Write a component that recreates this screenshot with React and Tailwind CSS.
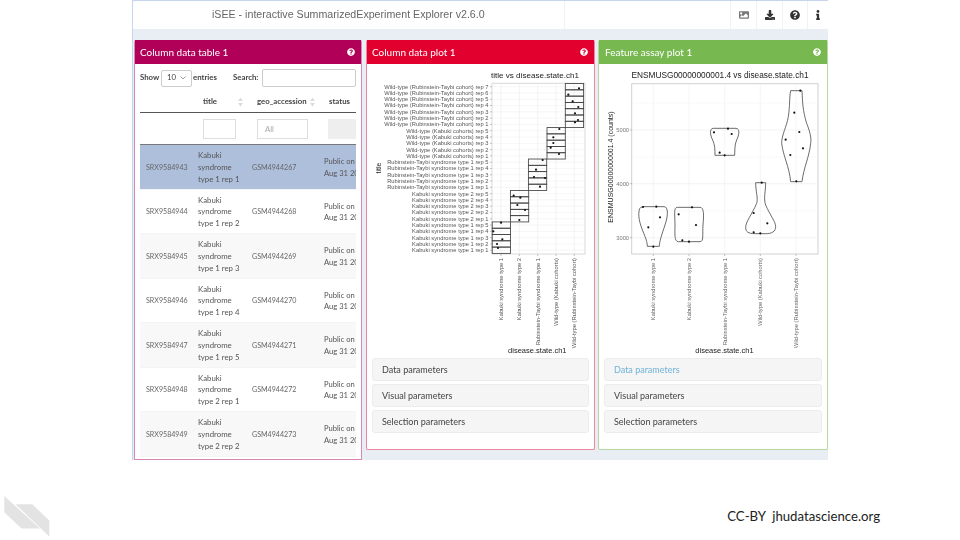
import React from "react";
import { FaDownload, FaQuestionCircle, FaInfo, FaImage } from "react-icons/fa";

const rows = [
  ["SRX9584943", "type 1 rep 1", "Kabuki", "GSM4944267", "bg-[#aebfdc]"],
  ["SRX9584944", "type 1 rep 2", "Kabuki", "GSM4944268", "bg-white"],
  ["SRX9584945", "type 1 rep 3", "Kabuki", "GSM4944269", "bg-[#f8f8f8]"],
  ["SRX9584946", "type 1 rep 4", "Kabuki", "GSM4944270", "bg-white"],
  ["SRX9584947", "type 1 rep 5", "Kabuki", "GSM4944271", "bg-[#f8f8f8]"],
  ["SRX9584948", "type 2 rep 1", "Kabuki", "GSM4944272", "bg-white"],
  ["SRX9584949", "type 2 rep 2", "Kabuki", "GSM4944273", "bg-[#f8f8f8]"],
];

function Sort() {
  return (
    <svg width="5" height="10" viewBox="0 0 5 10" className="shrink-0">
      <path d="M2.5 0.5 L5 4 L0 4 Z M2.5 9.5 L5 6 L0 6 Z" fill="#dcdcdc" />
    </svg>
  );
}

function Header({ title, bar, border, children, cls }) {
  return (
    <section className={`flex flex-col shrink-0 border-x border-b rounded-t-[2px] ${border} ${cls}`}>
      <header className={`h-[24px] shrink-0 flex items-center justify-between pr-[6px] text-white text-[10px] ${bar}`}>
        <span>{title}</span>
        <FaQuestionCircle className="w-[8px] h-[8px]" />
      </header>
      {children}
    </section>
  );
}

function Table() {
  return (
    <div className="flex-1 min-h-0 overflow-hidden bg-white px-[5px] text-[7.8px] text-[#555]">
      <div className="h-[28px] flex items-center text-[#444]">
        <span className="w-[21px] font-bold">Show</span>
        <span className="w-[31px] h-[17px] border border-[#ccc] rounded-[2px] flex items-center justify-between px-[5px] font-normal">
          <span>10</span>
          <svg width="6" height="4" viewBox="0 0 6 4"><path d="M0.5 0.5 L3 3 L5.5 0.5" fill="none" stroke="#777" strokeWidth="0.7" /></svg>
        </span>
        <span className="w-[41px] pl-[1px] font-bold">entries</span>
        <span className="w-[29px] font-bold">Search:</span>
        <span className="w-[94px] h-[18px] border border-[#ccc] rounded-[2px] bg-white" />
      </div>
      <div className="grid grid-cols-[58px_54px_72px_32px] h-[21px] border-b border-[#555] items-center font-bold text-[#444]">
        <span />
        <span className="pl-[5px] flex justify-between pr-[9px] items-center">title<Sort /></span>
        <span className="pl-[5px] flex justify-between pr-[9px] items-center">geo_accession<Sort /></span>
        <span className="pl-[5px]">status</span>
      </div>
      <div className="grid grid-cols-[58px_54px_72px_32px] h-[32px] border-b border-[#777] pt-[6px] items-start">
        <span />
        <span className="ml-[5px] w-[33px] h-[20px] border border-[#ddd] bg-white" />
        <span className="ml-[5px] w-[51px] h-[20px] border border-[#ddd] bg-white text-[#aaa] pl-[7px] leading-[18px]">All</span>
        <span className="ml-[4px] h-[20px] bg-[#eeeeee]" />
      </div>
      {rows.map((r) => (
        <div key={r[0]} className={`grid grid-cols-[58px_54px_72px_32px] h-[44.5px] pt-[2px] items-center leading-[11.7px] border-b border-[#f4f4f4] ${r[4]}`}>
          <span className="pl-[6px] text-[7.1px] text-[#666]">{r[0]}</span>
          <span>{r[2]}<br />syndrome<br />{r[1]}</span>
          <span className="text-[7.1px] text-[#666]">{r[3]}</span>
          <span className="whitespace-nowrap overflow-hidden text-[7.6px]">Public on<br />Aug 31 20</span>
        </div>
      ))}
    </div>
  );
}

function Accordion({ active, cls }) {
  const items = ["Data parameters", "Visual parameters", "Selection parameters"];
  return (
    <div className={`flex flex-col gap-[3px] ${cls}`}>
      {items.map((t, i) => (
        <div key={t} className={`h-[23px] rounded-[3px] bg-[#f5f5f5] border border-[#ececec] flex items-center pl-[9px] text-[9px] ${active && i === 0 ? "text-[#6fb2da]" : "text-[#444]"}`}>
          {t}
        </div>
      ))}
    </div>
  );
}

const labels = [
  ...[7, 6, 5, 4, 3, 2, 1].map((n) => `Wild-type (Rubinstein-Taybi cohort) rep ${n}`),
  ...[5, 4, 3, 2, 1].map((n) => `Wild-type (Kabuki cohorts) rep ${n}`),
  ...[5, 4, 3, 2, 1].map((n) => `Rubinstein-Taybi syndrome type 1 rep ${n}`),
  ...[5, 4, 3, 2, 1].map((n) => `Kabuki syndrome type 2 rep ${n}`),
  ...[5, 4, 3, 2, 1].map((n) => `Kabuki syndrome type 1 rep ${n}`),
];
const cats = ["Kabuki syndrome type 1", "Kabuki syndrome type 2", "Rubinstein-Taybi syndrome type 1", "Wild-type (Kabuki cohorts)", "Wild-type (Rubinstein-Taybi cohort)"];
const rowY = (i) => 86.7 + i * 6.29;
const svgFont = "Liberation Sans, Arial, sans-serif";

function TitlePlot() {
  const ticks = [501, 519.3, 537.7, 556, 574.3];
  const boxes = [
    [565.3, 0, 7], [547, 7, 5], [528.4, 12, 5], [510.4, 17, 5], [492.2, 22, 5],
  ];
  const pts3 = [[642,85],[610,104],[623,124],[640,141],[630,160],[639,180],[630,187],[583,207],[565,232],[565,249],[557,263],[582,282],[533,300],[513,329],[507,351],[540,354],[525,380],[446,407],[466,413],[457,435]];
  const pts4 = [[480,15],[463,45],[408,53],[385,79],[412,103],[396,117],[399,129]];
  return (
    <svg viewBox="367 64 227 294" className="w-[227px] h-[294px] block shrink-0" fontFamily={svgFont}>
      <text x="535" y="78" textAnchor="middle" fontSize="8.1" fill="#222">title vs disease.state.ch1</text>
      <rect x="492" y="83.3" width="93" height="170.7" fill="#fff" stroke="#d9d9d9" strokeWidth="1" />
      {labels.map((l, i) => (
        <g key={l}>
          <line x1="492" x2="585" y1={rowY(i)} y2={rowY(i)} stroke="#f0f0f0" strokeWidth="0.6" />
          <line x1="490" x2="492" y1={rowY(i)} y2={rowY(i)} stroke="#888" strokeWidth="0.5" />
          <text x="488.5" y={rowY(i) + 1.9} textAnchor="end" fontSize="5.75" fill="#555">{l}</text>
        </g>
      ))}
      {ticks.map((x, i) => (
        <g key={x}>
          <line x1={x} x2={x} y1="83.3" y2="254" stroke="#eeeeee" strokeWidth="0.7" />
          <line x1={x} x2={x} y1="254" y2="256" stroke="#888" strokeWidth="0.5" />
          <text transform={`translate(${x + 1.9} 258) rotate(-90)`} textAnchor="end" fontSize="5.8" fill="#555">{cats[i]}</text>
        </g>
      ))}
      {boxes.map(([x, s, n]) =>
        Array.from({ length: n }).map((_, k) => (
          <rect key={`${x}-${k}`} x={x} y={rowY(s + k) - 3.15} width="18.3" height="6.29" fill="none" stroke="#444" strokeWidth="0.85" />
        ))
      )}
      {pts3.map(([x, y], i) => <circle key={i} cx={365 + x / 3} cy={60 + y / 3} r="1.1" fill="#111" />)}
      {pts4.map(([x, y], i) => <circle key={i} cx={365 + x / 3} cy={205 + y / 3} r="1.1" fill="#111" />)}
      <text x="537.3" y="353" textAnchor="middle" fontSize="7.5" fill="#222">disease.state.ch1</text>
      <text transform="translate(380.5 168) rotate(-90)" textAnchor="middle" fontSize="7" fill="#222">title</text>
    </svg>
  );
}

function ViolinPlot() {
  const ticks = [653.3, 689, 724.7, 760.3, 796];
  const ys = [[130, "5000"], [183.7, "4000"], [237.7, "3000"]];
  const minor = [103, 157, 211];
  return (
    <svg viewBox="599 64 228 294" className="w-[228px] h-[294px] block shrink-0" fontFamily={svgFont}>
      <text x="720" y="78" textAnchor="middle" fontSize="8.3" fill="#222">ENSMUSG00000000001.4 vs disease.state.ch1</text>
      <rect x="631.7" y="83.7" width="186.3" height="170.3" fill="#fff" stroke="#d0d0d0" strokeWidth="1" />
      {minor.map((y) => <line key={y} x1="632" x2="818" y1={y} y2={y} stroke="#f5f5f5" strokeWidth="0.6" />)}
      {ys.map(([y, t]) => (
        <g key={t}>
          <line x1="632" x2="818" y1={y} y2={y} stroke="#eeeeee" strokeWidth="0.7" />
          <line x1="630" x2="632" y1={y} y2={y} stroke="#888" strokeWidth="0.5" />
          <text x="629" y={y + 1.9} textAnchor="end" fontSize="5.7" fill="#777">{t}</text>
        </g>
      ))}
      {ticks.map((x, i) => (
        <g key={x}>
          <line x1={x} x2={x} y1="84" y2="254" stroke="#f0f0f0" strokeWidth="0.7" />
          <line x1={x} x2={x} y1="254" y2="256" stroke="#888" strokeWidth="0.5" />
          <text transform={`translate(${x + 1.9} 258) rotate(-90)`} textAnchor="end" fontSize="5.8" fill="#666">{cats[i]}</text>
        </g>
      ))}
      <g transform="translate(600 205) scale(0.3333)" fill="none" stroke="#555" strokeWidth="2.6">
        <path d="M128 5 L192 5 C205 5 205 30 195 60 C185 90 178 110 178 124 L142 124 C142 105 130 85 122 60 C115 40 112 5 128 5 Z" />
        <path d="M232 7 L300 7 C312 7 312 30 309 60 C307 90 312 110 300 110 L235 110 C222 110 225 85 225 60 C225 30 220 7 232 7 Z" />
        <path d="M467 -67 L497 -67 C497 -40 490 -20 497 0 C510 30 527 50 527 65 C527 80 515 86 497 86 L465 86 C445 86 437 80 437 68 C437 50 455 30 470 -5 C475 -20 467 -40 467 -67 Z" />
        {[[129,6],[169,5],[180,37],[145,67],[160,125],[236,28],[276,7],[288,60],[247,106],[267,110],[461,24],[502,55],[461,82],[481,85],[485,-67]].map(([x, y], i) => (
          <circle key={i} cx={x} cy={y} r="3.3" fill="#111" stroke="none" />
        ))}
      </g>
      <g transform="translate(600 60) scale(0.3333)" fill="none" stroke="#555" strokeWidth="2.6">
        <path d="M340 205 L408 205 C420 205 418 225 410 240 C403 255 405 275 404 286 L345 286 C345 270 345 255 338 240 C330 225 328 205 340 205 Z" />
        <path d="M572 92 L606 92 C608 130 608 150 620 190 C630 215 635 235 632 250 C628 290 612 320 606 365 L572 365 C568 320 550 290 545 250 C545 225 560 200 565 170 C570 140 568 110 572 92 Z" />
        {[[342,217],[384,206],[395,222],[359,278],[374,286],[601,92],[583,158],[598,216],[557,239],[609,265],[571,285],[589,364]].map(([x, y], i) => (
          <circle key={i} cx={x} cy={y} r="3.3" fill="#111" stroke="none" />
        ))}
      </g>
      <text x="724.5" y="353" textAnchor="middle" fontSize="7.5" fill="#222">disease.state.ch1</text>
      <text transform="translate(613 167) rotate(-90)" textAnchor="middle" fontSize="7" fill="#222">ENSMUSG00000000001.4 (counts)</text>
    </svg>
  );
}

export default function App() {
  const cells = [
    [FaImage, "w-[26px]", "text-[#777]"],
    [FaDownload, "w-[26px]", "text-[#333]"],
    [FaQuestionCircle, "w-[25px]", "text-[#333]"],
    [FaInfo, "w-[20px]", "text-[#333]"],
  ];
  return (
    <div className="w-[960px] h-[540px] bg-white overflow-hidden font-['Lato','Liberation_Sans',sans-serif]">
      <div className="ml-[132px] w-[696px] h-[460px] bg-[#e9edf4] border-l border-t border-[#c5d5ee] flex flex-col blur-[0.4px]">
        <div className="h-[28px] shrink-0 bg-white flex items-center">
          <div className="w-[431px] shrink-0 h-full flex items-center pl-[79px] text-[10.65px] text-[#666] font-['Liberation_Sans',sans-serif] whitespace-nowrap">
            iSEE - interactive SummarizedExperiment Explorer v2.6.0
          </div>
          <div className="w-[166px] shrink-0 h-full border-l border-[#f2f2f2]" />
          {cells.map(([Icon, w, c], i) => (
            <div key={i} className={`${w} shrink-0 h-full border-l border-[#f2f2f2] flex items-center justify-center ${c}`}>
              <Icon className="w-[10px] h-[10px]" />
            </div>
          ))}
        </div>
        <div className="h-[11px] shrink-0" />
        <div className="flex-1 min-h-0 flex gap-[4px] items-start">
          <Header title="Column data table 1" bar="bg-[#b00058] pl-[5px]" border="border-[#d987b8]" cls="w-[228px] h-[420px] ml-[1px] bg-white">
            <Table />
          </Header>
          <Header title="Column data plot 1" bar="bg-[#e2002f] pl-[5px]" border="border-[#ea86a0]" cls="w-[229px] h-[410px] bg-white rounded-b-[2px]">
            <TitlePlot />
            <Accordion cls="px-[5px]" />
          </Header>
          <Header title="Feature assay plot 1" bar="bg-[#78b850] pl-[6px]" border="border-[#b4d8a0]" cls="w-[230px] h-[410px] -ml-[1px] bg-white rounded-b-[2px]">
            <ViolinPlot />
            <Accordion active cls="px-[5px]" />
          </Header>
        </div>
      </div>
      <footer className="flex justify-between items-start pl-[4px] pr-[80px]">
        <svg width="46" height="42" viewBox="0 0 46 42" className="mt-[36px]">
          <path d="M0.3 0 V16.3 L17.6 32.6 H36 Z" fill="#e3e3e3" />
          <path d="M11.6 8.3 H28.3 L45.3 24.6 V40.6 Z" fill="#e3e3e3" />
        </svg>
        <span className="mt-[47px] text-[13.2px] leading-[18px] text-[#222] whitespace-nowrap">CC-BY&nbsp; jhudatascience.org</span>
      </footer>
    </div>
  );
}
